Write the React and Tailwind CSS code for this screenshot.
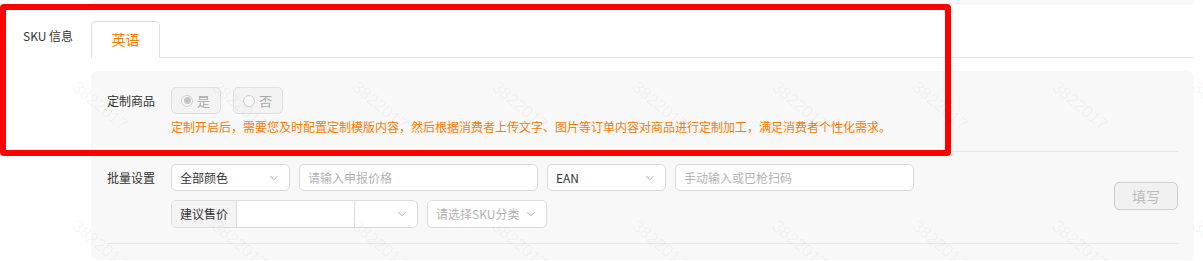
import { ChevronDown } from "lucide-react";

const font = { fontFamily: '"Noto Sans CJK SC", "Noto Sans", sans-serif' };

function Select({ value, placeholder, className = "" }) {
  return (
    <div className={`flex h-[27px] items-center justify-between rounded-[5px] border border-[#dcdcdc] bg-white pl-[8px] pr-[8px] text-[12px] ${className}`}>
      <span className={value ? "text-[#333]" : "text-[#b3b3b3]"}>{value || placeholder}</span>
      <ChevronDown size={14} strokeWidth={1.4} className="text-[#999]" />
    </div>
  );
}

function Input({ placeholder, className = "" }) {
  return (
    <div className={`flex h-[27px] items-center rounded-[5px] border border-[#dcdcdc] bg-white px-[8px] text-[12px] text-[#b3b3b3] ${className}`}>
      {placeholder}
    </div>
  );
}

function Radio({ label, checked }) {
  return (
    <div className="flex h-[27px] w-[50px] items-center gap-[4px] rounded-[5px] border border-[#dedede] bg-[#f3f3f3] pl-[9px] text-[13px] text-[#aaa]">
      <span className="flex h-[12px] w-[12px] items-center justify-center rounded-full border border-[#cfcfcf] bg-[#f7f7f7]">
        {checked && <span className="h-[7px] w-[7px] rounded-full bg-[#c4c4c4]" />}
      </span>
      {label}
    </div>
  );
}

const marks = [];
[78, 217].forEach((top) => {
  for (let i = 0; i < 9; i++) marks.push({ left: 80 + i * 140, top });
});

export default function App() {
  return (
    <div className="relative h-[261px] w-[1203px] overflow-hidden bg-white" style={font}>
      {/* tail of the section above */}
      <div className="ml-[91px] h-[5px] w-[1103px] rounded-b-md bg-[#f8f8f8]" />

      <div className="flex">
        <div className="w-[91px] shrink-0 pl-[23px] pt-[22px] text-[12px] text-[#333]">SKU 信息</div>

        <div className="w-[1103px]">
          <div className="mt-[16px] flex h-[37px] border-b border-[#e6e6e6]">
            <div className="-mb-px flex w-[69px] items-center justify-center rounded-t-[5px] border border-b-white border-[#dcdcdc] bg-white text-[14px] text-[#ff7d00]">
              英语
            </div>
          </div>

          <div className="mt-[13px] rounded-md bg-[#f8f8f8] px-[16px] pb-[16px]">
            <div className="flex border-b border-[#e8e8e8] pb-[16px] pt-[16px]">
              <div className="w-[64px] shrink-0 pt-[5px] text-[12px] text-[#333]">定制商品</div>
              <div>
                <div className="flex gap-[12px]">
                  <Radio label="是" checked />
                  <Radio label="否" />
                </div>
                <p className="mt-[5px] text-[12px] leading-[16px] text-[#ff7a00]">
                  定制开启后，需要您及时配置定制模版内容，然后根据消费者上传文字、图片等订单内容对商品进行定制加工，满足消费者个性化需求。
                </p>
              </div>
            </div>

            <div className="flex items-center border-b border-[#e8e8e8] pb-[15px] pt-[12px]">
              <div className="w-[64px] shrink-0 self-start pt-[5px] text-[12px] text-[#333]">批量设置</div>
              <div className="flex flex-col gap-[9px]">
                <div className="flex gap-[9px]">
                  <Select value="全部颜色" className="w-[119px]" />
                  <Input placeholder="请输入申报价格" className="w-[239px]" />
                  <Select value="EAN" className="w-[119px]" />
                  <Input placeholder="手动输入或巴枪扫码" className="w-[239px]" />
                </div>
                <div className="flex gap-[9px]">
                  <div className="flex h-[28px] w-[247px] overflow-hidden rounded-[5px] border border-[#dcdcdc] bg-white text-[12px]">
                    <div className="flex w-[65px] items-center justify-center border-r border-[#dcdcdc] bg-[#f4f4f4] text-[#333]">建议售价</div>
                    <div className="w-[118px] border-r border-[#dcdcdc]" />
                    <div className="flex flex-1 items-center justify-end pr-[8px]">
                      <ChevronDown size={14} strokeWidth={1.4} className="text-[#999]" />
                    </div>
                  </div>
                  <Select placeholder="请选择SKU分类" className="h-[28px] w-[120px]" />
                </div>
              </div>
              <button className="ml-auto flex h-[28px] w-[64px] items-center justify-center rounded-[5px] border border-[#cccccc] bg-[#f1f1f1] text-[14px] text-[#bdbdbd]">
                填写
              </button>
            </div>
          </div>
        </div>
      </div>

      {/* watermark */}
      <div className="pointer-events-none absolute inset-0">
        {marks.map((m, i) => (
          <span
            key={i}
            className="absolute origin-top-left rotate-[40deg] text-[17px] leading-none text-black/[0.05]"
            style={{ left: m.left, top: m.top, fontFamily: '"Liberation Sans", sans-serif' }}
          >
            3822017
          </span>
        ))}
      </div>

      {/* annotation frame */}
      <div className="pointer-events-none absolute left-0 top-[4px] h-[152px] w-[951px] rounded-[4px] border-[6px] border-[#ff0000]" />
    </div>
  );
}
